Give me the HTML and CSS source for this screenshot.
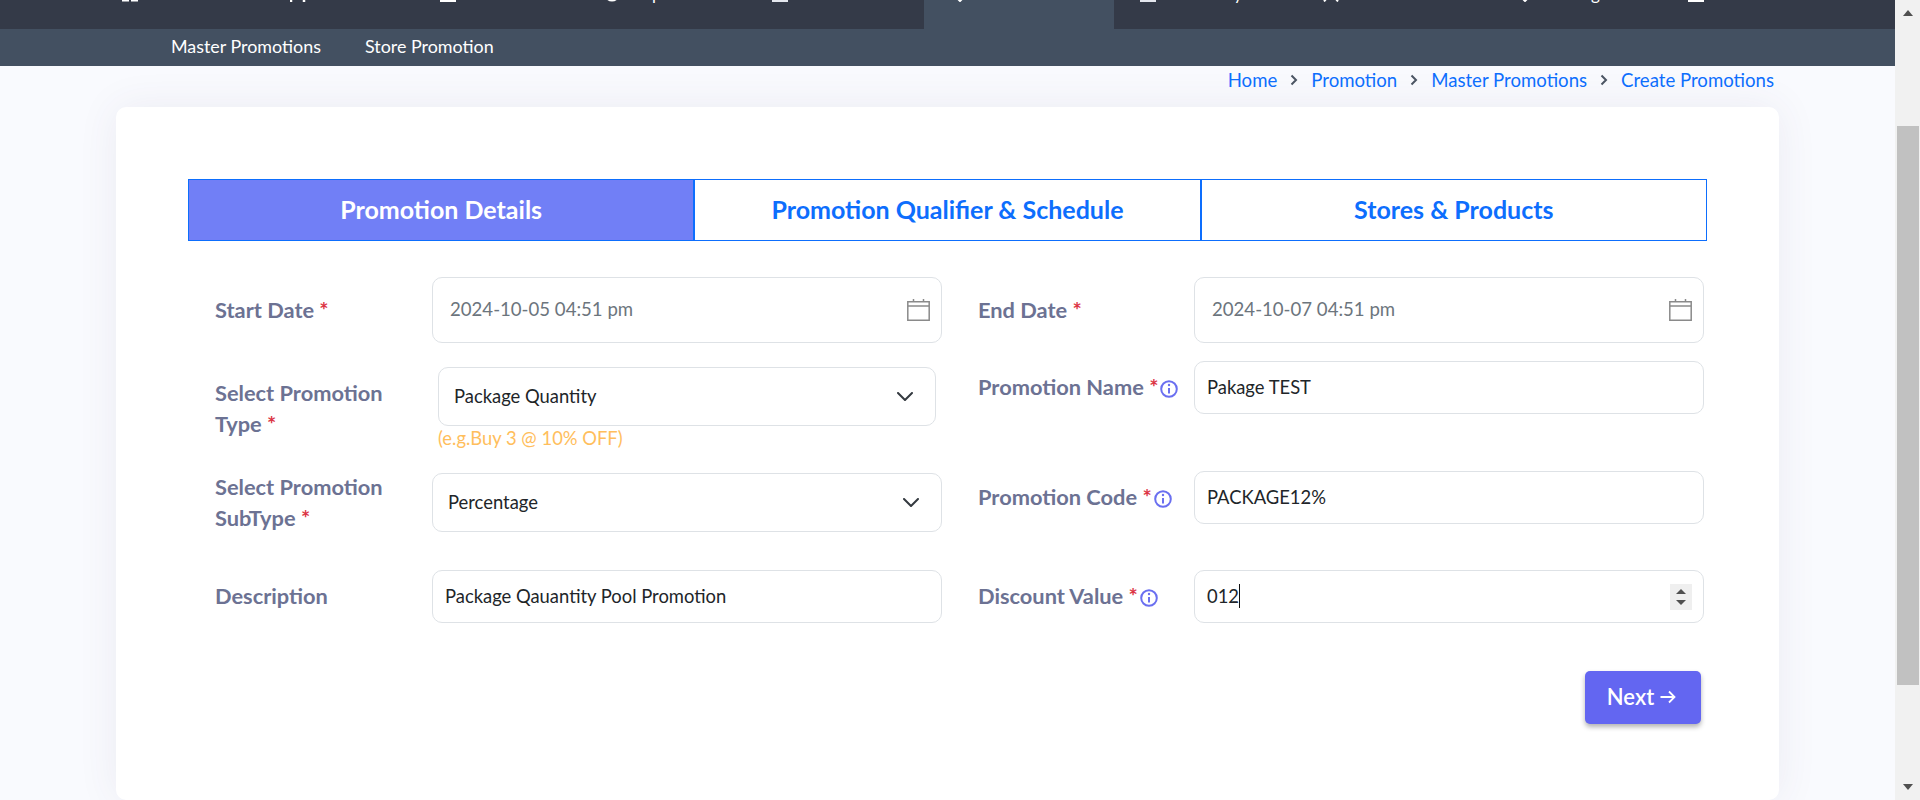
FILE: index.html
```html
<!DOCTYPE html>
<html lang="en">
<head>
    <meta charset="UTF-8">
    <title>Create Promotions</title>
    <link rel="stylesheet" href="styles.css">
</head>
<body>
<div class="screen">
    <div class="page">
        <div class="topnav">
            <div class="navitem"><svg class="navicon" viewBox="0 0 16 16"><path d="M1 9h5v5.500H1zM10 9h5v5.500h-5z" fill="none" stroke="#fff" stroke-width="2"/></svg><span>Dashboard</span></div>
            <div class="navitem"><svg class="navicon" viewBox="0 0 16 16"><path d="M1 8v8M14 8v8" fill="none" stroke="#fff" stroke-width="2.500"/></svg><span>Sales</span></div>
            <div class="navitem"><svg class="navicon" viewBox="0 0 16 16"><path d="M1 1h14v14H1z" fill="none" stroke="#fff" stroke-width="2"/></svg><span>Orders</span></div>
            <div class="navitem"><svg class="navicon" viewBox="0 0 16 16"><circle cx="8" cy="7.500" r="7" fill="none" stroke="#fff" stroke-width="2"/></svg><span>Reports</span></div>
            <div class="navitem"><svg class="navicon" viewBox="0 0 16 16"><path d="M0 1h17v14H0z" fill="none" stroke="#e4e7ee" stroke-width="2"/></svg><span>Products</span></div>
            <div class="navitem active"><svg class="navicon" viewBox="0 0 16 16"><path d="M8 1l7 7-7 7-7-7z" fill="none" stroke="#fff" stroke-width="2"/></svg><span>Promotion</span></div>
            <div class="navitem"><svg class="navicon" viewBox="0 0 16 16"><path d="M0 1h17v14H0z" fill="none" stroke="#e4e7ee" stroke-width="2"/></svg><span>Inventory</span></div>
            <div class="navitem"><svg class="navicon" viewBox="0 0 16 16"><path d="M8 7 1 15.500M8 7l7 8.500" fill="none" stroke="#fff" stroke-width="2"/></svg><span>Customers</span></div>
            <div class="navitem"><svg class="navicon" viewBox="0 0 16 16"><path d="M8 1l7 7-7 7-7-7z" fill="none" stroke="#fff" stroke-width="2"/></svg><span>Manage</span></div>
            <div class="navitem"><svg class="navicon" viewBox="0 0 16 16"><path d="M0 1h17v14H0z" fill="none" stroke="#fff" stroke-width="2"/></svg><span>Contacts</span></div>
        </div>
        <div class="subnav">
            <a href="#">Master Promotions</a>
            <a href="#">Store Promotion</a>
        </div>
        <div class="crumbs">
            <a href="#">Home</a>
            <svg class="crumbsep" viewBox="0 0 8 12"><path d="M1.500 1.500 6 6l-4.500 4.500" fill="none" stroke="#4b5563" stroke-width="2"/></svg>
            <a href="#">Promotion</a>
            <svg class="crumbsep" viewBox="0 0 8 12"><path d="M1.500 1.500 6 6l-4.500 4.500" fill="none" stroke="#4b5563" stroke-width="2"/></svg>
            <a href="#">Master Promotions</a>
            <svg class="crumbsep" viewBox="0 0 8 12"><path d="M1.500 1.500 6 6l-4.500 4.500" fill="none" stroke="#4b5563" stroke-width="2"/></svg>
            <a href="#">Create Promotions</a>
        </div>
        <div class="card">
            <div class="tabs">
                <div class="tab active">Promotion Details</div>
                <div class="tab">Promotion Qualifier &amp; Schedule</div>
                <div class="tab">Stores &amp; Products</div>
            </div>
            <div class="formgrid">
                <div class="col col-left">
                    <div class="row row-date">
                        <label class="lbl">Start Date <span class="req">*</span></label>
                        <div class="field field-date">
                            <span class="val muted">2024-10-05 04:51 pm</span>
                            <svg class="cal" viewBox="0 0 23 22"><path d="M.8 2.800h21.400v18.400H.8zM.8 7h21.400M6.500 0v3M16.500 0v3" fill="none" stroke="#8a8a8a" stroke-width="1.500"/></svg>
                        </div>
                    </div>
                    <div class="row row-type">
                        <label class="lbl">Select Promotion Type <span class="req">*</span></label>
                        <div class="typewrap">
                            <div class="field field-select">
                                <span class="val">Package Quantity</span>
                                <svg class="chev" viewBox="0 0 16 9"><path d="M1 1l7 7 7-7" fill="none" stroke="#343a40" stroke-width="2" stroke-linecap="round" stroke-linejoin="round"/></svg>
                            </div>
                            <div class="hint">(e.g.Buy 3 @ 10% OFF)</div>
                        </div>
                    </div>
                    <div class="row row-subtype">
                        <label class="lbl">Select Promotion SubType <span class="req">*</span></label>
                        <div class="field field-select">
                            <span class="val">Percentage</span>
                            <svg class="chev" viewBox="0 0 16 9"><path d="M1 1l7 7 7-7" fill="none" stroke="#343a40" stroke-width="2" stroke-linecap="round" stroke-linejoin="round"/></svg>
                        </div>
                    </div>
                    <div class="row row-desc">
                        <label class="lbl">Description</label>
                        <div class="field field-text"><span class="val">Package Qauantity Pool Promotion</span></div>
                    </div>
                </div>
                <div class="col col-right">
                    <div class="row row-date">
                        <label class="lbl">End Date <span class="req">*</span></label>
                        <div class="field field-date">
                            <span class="val muted">2024-10-07 04:51 pm</span>
                            <svg class="cal" viewBox="0 0 23 22"><path d="M.8 2.800h21.400v18.400H.8zM.8 7h21.400M6.500 0v3M16.500 0v3" fill="none" stroke="#8a8a8a" stroke-width="1.500"/></svg>
                        </div>
                    </div>
                    <div class="row row-name">
                        <label class="lbl">Promotion Name <span class="req">*</span><svg class="info" viewBox="0 0 18 18"><circle cx="9" cy="9" r="7.800" fill="none" stroke="#6a6ff0" stroke-width="2"/><path d="M9 8v5.500" stroke="#6a6ff0" stroke-width="2"/><circle cx="9" cy="5" r="1.200" fill="#6a6ff0"/></svg></label>
                        <div class="field field-text"><span class="val">Pakage TEST</span></div>
                    </div>
                    <div class="row row-code">
                        <label class="lbl">Promotion Code <span class="req">*</span><svg class="info" viewBox="0 0 18 18"><circle cx="9" cy="9" r="7.800" fill="none" stroke="#6a6ff0" stroke-width="2"/><path d="M9 8v5.500" stroke="#6a6ff0" stroke-width="2"/><circle cx="9" cy="5" r="1.200" fill="#6a6ff0"/></svg></label>
                        <div class="field field-text"><span class="val">PACKAGE12%</span></div>
                    </div>
                    <div class="row row-value">
                        <label class="lbl">Discount Value <span class="req">*</span><svg class="info" viewBox="0 0 18 18"><circle cx="9" cy="9" r="7.800" fill="none" stroke="#6a6ff0" stroke-width="2"/><path d="M9 8v5.500" stroke="#6a6ff0" stroke-width="2"/><circle cx="9" cy="5" r="1.200" fill="#6a6ff0"/></svg></label>
                        <div class="field field-text field-num">
                            <span class="val numval">012<span class="caret"></span></span>
                            <span class="spin"><i class="up"></i><i class="down"></i></span>
                        </div>
                    </div>
                </div>
            </div>
            <div class="actions">
                <button class="nextbtn" type="button">Next <svg class="arrow" viewBox="0 0 16 16"><path d="M.5 8h14M9 2.500 14.500 8 9 13.500" fill="none" stroke="#fff" stroke-width="1.800"/></svg></button>
            </div>
        </div>
    </div>
    <div class="scrollbar">
        <span class="sb-arrow sb-up"></span>
        <div class="sb-track"><div class="sb-thumb"></div></div>
        <span class="sb-arrow sb-down"></span>
    </div>
</div>
</body>
</html>
```

FILE: styles.css
```css
* {
    box-sizing: border-box;
}
html, body {
    margin: 0;
    height: 100%;
    overflow: hidden;
}
body {
    font-family: "Lato", "Open Sans", sans-serif;
    font-size: 18.4px;
    color: #212529;
}
a {
    text-decoration: none;
}
.screen {
    display: flex;
    height: 800px;
}
.page {
    width: 1895px;
    height: 800px;
    overflow: hidden;
    background: #f9fafe;
}

/* top menu, scrolled mostly out of view */
.topnav {
    display: flex;
    height: 29px;
    padding-left: 122px;
    background: #343a48;
    overflow: hidden;
}
.navitem {
    display: flex;
    align-items: flex-start;
    color: #fff;
    font-size: 17px;
    line-height: 16px;
}
.navitem span {
    margin-top: -14px;
}
.navicon {
    width: 16px;
    height: 16px;
    margin-top: -14px;
    flex: none;
}
.navitem:nth-child(1) { width: 168px; column-gap: 30px; }
.navitem:nth-child(2) { width: 150px; column-gap: 21px; }
.navitem:nth-child(3) { width: 164px; column-gap: 21px; }
.navitem:nth-child(4) { width: 168px; column-gap: 13px; }
.navitem:nth-child(5) { width: 152px; column-gap: 14px; }
.navitem:nth-child(6) { width: 190px; column-gap: 16px; padding-left: 28px; background: #435061; }
.navitem:nth-child(7) { width: 183px; column-gap: 15px; margin-left: 26px; }
.navitem:nth-child(8) { width: 194px; column-gap: 21px; }
.navitem:nth-child(9) { width: 171px; column-gap: 16px; }
.navitem:nth-child(10) { column-gap: 20px; }

.subnav {
    display: flex;
    align-items: center;
    gap: 44px;
    height: 37px;
    padding: 0 0 3px 171px;
    background: #435061;
}
.subnav a {
    color: #fff;
    font-size: 17.900px;
}
.crumbs {
    display: flex;
    justify-content: flex-end;
    align-items: center;
    gap: 13px;
    height: 29px;
    padding: 0 121px 2px 0;
}
.crumbs a {
    color: #0d6efd;
    font-size: 18.600px;
}
.crumbsep {
    width: 8px;
    height: 12px;
}
.card {
    width: 1663px;
    height: 693px;
    margin: 12px 0 0 116px;
    padding: 72px 72px 0;
    background: #fff;
    border-radius: 10px;
    box-shadow: 0 0 40px rgba(82, 63, 105, 0.08);
}
.tabs {
    display: flex;
    height: 62px;
    width: 1519px;
}
.tab {
    flex: 1;
    display: flex;
    align-items: center;
    justify-content: center;
    padding-bottom: 2px;
    border: 1px solid #0d6efd;
    color: #0d6efd;
    font-size: 25px;
    font-weight: 700;
}
.tab.active {
    background: #717ff6;
    color: #fff;
}
.formgrid {
    display: grid;
    grid-template-columns: 763px 726px;
    margin-top: 36px;
    padding-left: 27px;
}
.col {
    display: flex;
    flex-direction: column;
}
.row {
    display: grid;
    align-items: center;
}
.col-left .row {
    grid-template-columns: 217px 510px;
}
.col-right .row {
    grid-template-columns: 216px 510px;
}
.lbl {
    padding-bottom: 2px;
    color: #6c7293;
    font-size: 21.800px;
    font-weight: 700;
    line-height: 31px;
}
.req {
    color: #dc3545;
}
.info {
    width: 18px;
    height: 18px;
    margin-left: 2px;
    vertical-align: -3px;
}
.field {
    display: flex;
    align-items: center;
    justify-content: space-between;
    background: #fff;
    border: 1px solid #dee2e6;
    border-radius: 10px;
}
.val {
    padding-bottom: 2px;
}
.muted {
    color: #6c757d;
    font-size: 18.600px;
}
.field-date {
    height: 66px;
    padding: 0 11px 0 17px;
}
.cal {
    width: 23px;
    height: 22px;
}
.field-select {
    height: 59px;
    padding: 0 22px 0 15px;
}
.chev {
    width: 16px;
    height: 9px;
}
.field-text {
    height: 53px;
    padding: 0 12px;
}
.row-type {
    align-items: start;
    height: 106px;
    margin-top: 24px;
}
.row-type .lbl {
    max-width: 190px;
    padding-top: 10px;
}
.typewrap {
    padding: 0 6px;
}
.hint {
    color: #ffbe5c;
    line-height: 20px;
    margin-top: 2px;
}
.row-subtype {
    grid-template-rows: 59px;
}
.row-desc {
    margin-top: 38px;
}
.row-name {
    margin-top: 18px;
}
.row-code {
    margin-top: 57px;
}
.row-value {
    margin-top: 46px;
}
.col-right .field-text {
    padding-left: 12px;
}
.field-num {
    padding-right: 11px;
}
.numval {
    display: flex;
    align-items: center;
}
.caret {
    width: 1px;
    height: 24px;
    background: #111;
}
.spin {
    display: flex;
    flex-direction: column;
    justify-content: center;
    align-items: center;
    gap: 6px;
    width: 22px;
    height: 26px;
    background: #efefef;
}
.spin i {
    width: 0;
    height: 0;
    border-left: 5px solid transparent;
    border-right: 5px solid transparent;
}
.spin .up {
    border-bottom: 5px solid #505050;
}
.spin .down {
    border-top: 5px solid #505050;
}
.actions {
    display: flex;
    justify-content: flex-end;
    width: 1513px;
    margin-top: 48px;
}
.nextbtn {
    display: flex;
    align-items: center;
    justify-content: center;
    gap: 6px;
    width: 116px;
    height: 53px;
    padding: 0 3px 2px 0;
    background: #6366f1;
    border: none;
    border-radius: 5px;
    color: #fff;
    font-family: inherit;
    font-size: 22px;
    font-weight: 600;
    box-shadow: 0 3px 5px rgba(0, 0, 0, 0.3);
}
.arrow {
    width: 16px;
    height: 16px;
}
.scrollbar {
    display: flex;
    flex-direction: column;
    width: 25px;
    height: 800px;
    background: #f1f1f1;
}
.sb-arrow {
    display: flex;
    justify-content: center;
    align-items: center;
    height: 20px;
    flex: none;
}
.sb-arrow::after {
    content: "";
    margin-left: 1px;
    border-left: 5px solid transparent;
    border-right: 5px solid transparent;
}
.sb-up {
    padding-top: 6px;
}
.sb-up::after {
    border-bottom: 6px solid #505050;
}
.sb-down {
    padding-bottom: 6px;
}
.sb-down::after {
    border-top: 6px solid #505050;
}
.sb-track {
    flex: 1;
    padding: 106px 1px 0 2px;
}
.sb-thumb {
    height: 559px;
    background: #c1c1c1;
}
```
